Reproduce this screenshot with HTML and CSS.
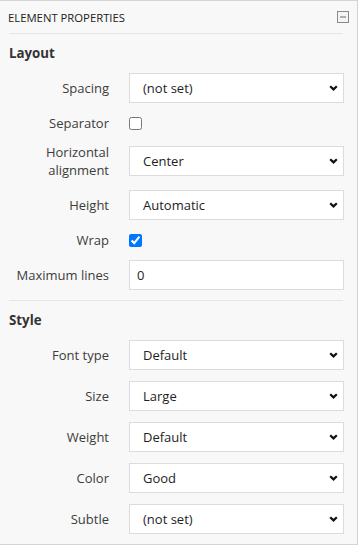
FILE: index.html
```html
<!DOCTYPE html>
<html>
<head>
    <title>Element Properties</title>
    <link rel="stylesheet" href="styles.css">
</head>
<body>
    <div class="panel">
        <div class="panel-header">
            <span class="panel-title">Element properties</span>
            <svg class="collapse" width="12" height="12" viewBox="0 0 12 12">
                <rect x="0.5" y="0.5" width="11" height="11" fill="#f4f4f4" stroke="#8a8a8a"/>
                <line x1="3" y1="6" x2="9" y2="6" stroke="#6a6a6a" stroke-width="1"/>
            </svg>
        </div>

        <div class="section">
            <h3>Layout</h3>
            <div class="props">
                <label>Spacing</label>
                <div class="select-wrap">
                    <select><option>(not set)</option></select>
                    <svg class="chevron" width="9" height="6" viewBox="0 0 9 6"><polyline points="1.2,1.2 4.5,4.4 7.8,1.2" fill="none" stroke="#111" stroke-width="2.2"/></svg>
                </div>

                <label>Separator</label>
                <div class="check"><input type="checkbox"></div>

                <label>Horizontal alignment</label>
                <div class="select-wrap">
                    <select><option>Center</option></select>
                    <svg class="chevron" width="9" height="6" viewBox="0 0 9 6"><polyline points="1.2,1.2 4.5,4.4 7.8,1.2" fill="none" stroke="#111" stroke-width="2.2"/></svg>
                </div>

                <label>Height</label>
                <div class="select-wrap">
                    <select><option>Automatic</option></select>
                    <svg class="chevron" width="9" height="6" viewBox="0 0 9 6"><polyline points="1.2,1.2 4.5,4.4 7.8,1.2" fill="none" stroke="#111" stroke-width="2.2"/></svg>
                </div>

                <label>Wrap</label>
                <div class="check"><input type="checkbox" checked></div>

                <label>Maximum lines</label>
                <input type="text" class="text-input" value="0">
            </div>
        </div>

        <div class="section">
            <h3>Style</h3>
            <div class="props">
                <label>Font type</label>
                <div class="select-wrap">
                    <select><option>Default</option></select>
                    <svg class="chevron" width="9" height="6" viewBox="0 0 9 6"><polyline points="1.2,1.2 4.5,4.4 7.8,1.2" fill="none" stroke="#111" stroke-width="2.2"/></svg>
                </div>

                <label>Size</label>
                <div class="select-wrap">
                    <select><option>Large</option></select>
                    <svg class="chevron" width="9" height="6" viewBox="0 0 9 6"><polyline points="1.2,1.2 4.5,4.4 7.8,1.2" fill="none" stroke="#111" stroke-width="2.2"/></svg>
                </div>

                <label>Weight</label>
                <div class="select-wrap">
                    <select><option>Default</option></select>
                    <svg class="chevron" width="9" height="6" viewBox="0 0 9 6"><polyline points="1.2,1.2 4.5,4.4 7.8,1.2" fill="none" stroke="#111" stroke-width="2.2"/></svg>
                </div>

                <label>Color</label>
                <div class="select-wrap">
                    <select><option>Good</option></select>
                    <svg class="chevron" width="9" height="6" viewBox="0 0 9 6"><polyline points="1.2,1.2 4.5,4.4 7.8,1.2" fill="none" stroke="#111" stroke-width="2.2"/></svg>
                </div>

                <label>Subtle</label>
                <div class="select-wrap">
                    <select><option>(not set)</option></select>
                    <svg class="chevron" width="9" height="6" viewBox="0 0 9 6"><polyline points="1.2,1.2 4.5,4.4 7.8,1.2" fill="none" stroke="#111" stroke-width="2.2"/></svg>
                </div>
            </div>
        </div>
    </div>
</body>
</html>
```

FILE: styles.css
```css
body { margin: 0; background: #fff; font-family: "Open Sans", "Noto Sans", sans-serif; font-size: 13px; color: #333; }
.panel { width: 358px; height: 545px; box-sizing: border-box; background: #f8f8f8; border: 1px solid #d4d4d4; border-left: none; overflow: hidden; }
.panel-header { height: 32px; display: flex; align-items: center; justify-content: space-between; padding: 0 8px 0 8px; }
.panel-title { text-transform: uppercase; font-size: 11.3px; color: #222; }
.collapse { display: block; }
.section { margin: 0 14px 0 9px; border-top: 1px solid #e6e6e6; padding-bottom: 10px; }
.section h3 { margin: 0; padding-top: 10px; margin-bottom: 10px; font-size: 13.3px; line-height: 19px; font-weight: bold; color: #333; }
.props { display: grid; grid-template-columns: 100px 215px; column-gap: 20px; row-gap: 11px; align-items: center; }
.props label { text-align: right; line-height: 18px; color: #3c3c3c; }
.check { height: 18px; display: flex; align-items: center; }
.check input { margin: 0; width: 13px; height: 13px; }
.select-wrap { position: relative; }
.select-wrap select { display: block; width: 100%; height: 30px; margin: 0; padding: 0 20px 0 13px; appearance: none; -webkit-appearance: none; background: #fff; border: 1px solid #dcdcdc; border-radius: 0; font-family: inherit; font-size: 13px; color: #1e1e1e; }
.chevron { position: absolute; right: 6px; top: 12px; pointer-events: none; }
.text-input { display: block; box-sizing: border-box; width: 100%; height: 30px; margin: 0; padding: 0 7px; background: #fff; border: 1px solid #dcdcdc; border-radius: 0; font-family: inherit; font-size: 13px; color: #1e1e1e; }
```
